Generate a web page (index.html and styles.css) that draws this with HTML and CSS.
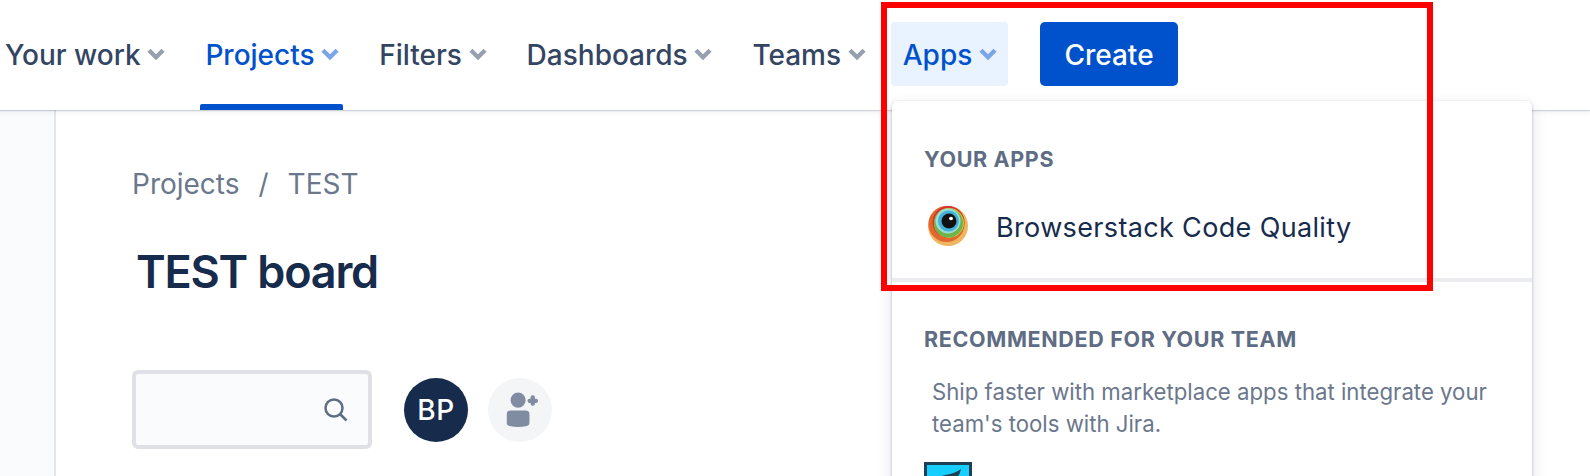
FILE: index.html
```html
<!DOCTYPE html>
<html lang="en">
<head>
<meta charset="utf-8">
<title>TEST board</title>
<link rel="stylesheet" href="styles.css">
</head>
<body>
<div class="page">
  <header class="topbar">
    <nav class="nav">
      <a class="nav-item">Your work<svg class="chev" viewBox="0 0 16 12"><path d="M1.500 2l6.500 6.500 6.500-6.500"/></svg></a>
      <a class="nav-item is-current">Projects<svg class="chev" viewBox="0 0 16 12"><path d="M1.500 2l6.500 6.500 6.500-6.500"/></svg><span class="underline"></span></a>
      <a class="nav-item">Filters<svg class="chev" viewBox="0 0 16 12"><path d="M1.500 2l6.500 6.500 6.500-6.500"/></svg></a>
      <a class="nav-item">Dashboards<svg class="chev" viewBox="0 0 16 12"><path d="M1.500 2l6.500 6.500 6.500-6.500"/></svg></a>
      <a class="nav-item">Teams<svg class="chev" viewBox="0 0 16 12"><path d="M1.500 2l6.500 6.500 6.500-6.500"/></svg></a>
      <a class="nav-item is-open">Apps<svg class="chev" viewBox="0 0 16 12"><path d="M1.500 2l6.500 6.500 6.500-6.500"/></svg></a>
    </nav>
    <button class="create">Create</button>
  </header>

  <div class="body">
    <aside class="rail"></aside>
    <main class="main">
      <div class="crumbs"><span>Projects</span><span class="slash">/</span><span>TEST</span></div>
      <h1 class="title">TEST board</h1>
      <div class="toolbar">
        <div class="search">
          <svg class="search-icon" viewBox="0 0 24 24"><circle cx="10" cy="10" r="8.500"/><path d="M16.500 16.500l6 6"/></svg>
        </div>
        <div class="avatar">BP</div>
        <div class="avatar-add">
          <svg viewBox="-2 0 36 38" class="add-icon">
            <circle cx="14" cy="8.500" r="8"/>
            <path d="M2 23.500a4 4 0 0 1 4-4h16a4 4 0 0 1 4 4v9c0 2-1 3-3 3.500-6 1.500-12 1.500-18 0-2-.5-3-1.500-3-3.500z"/>
            <rect x="24" y="7" width="11" height="4.500" rx="2"/>
            <rect x="27.250" y="3.500" width="4.500" height="11" rx="2"/>
          </svg>
        </div>
      </div>
    </main>
  </div>

  <section class="menu">
    <div class="menu-group menu-apps">
      <h2 class="menu-heading">YOUR APPS</h2>
      <div class="app-row">
        <svg class="app-logo" viewBox="0 0 40 40">
          <circle cx="20" cy="20" r="20" fill="#efb660"/>
          <circle cx="18.500" cy="18" r="18" fill="#e1672e"/>
          <circle cx="20.500" cy="16" r="16" fill="#d8352f"/>
          <circle cx="21" cy="17" r="15" fill="#c9cf3f"/>
          <circle cx="20.500" cy="17" r="14.500" fill="#6db54a"/>
          <circle cx="20" cy="15" r="12.500" fill="#9fdcd2"/>
          <circle cx="20.500" cy="15" r="10.500" fill="#3fb1dc"/>
          <circle cx="21" cy="15" r="7.500" fill="#111"/>
          <ellipse cx="23" cy="12.500" rx="2" ry="1.700" fill="#fff"/>
        </svg>
        <span class="app-name">Browserstack Code Quality</span>
      </div>
    </div>
    <div class="menu-group menu-rec">
      <h2 class="menu-heading">RECOMMENDED FOR YOUR TEAM</h2>
      <p class="menu-text">Ship faster with marketplace apps that integrate your team's tools with Jira.</p>
      <svg class="rec-logo" viewBox="0 0 48 48">
        <rect x="1.500" y="1.500" width="45" height="45" fill="#17cfff" stroke="#1d4057" stroke-width="3"/>
        <path d="M17 13c8 0 14-2 20-6-1 4-2 7-5 9-5-1-10-2-15-3z" fill="#1d4057"/>
      </svg>
    </div>
  </section>

  <div class="highlight"></div>
</div>
</body>
</html>
```

FILE: styles.css
```css
* { box-sizing: border-box; }
html, body { margin: 0; padding: 0; }
body { font-family: Inter, "Liberation Sans", sans-serif; background: #fff; color: #172b4d; }
.page { position: relative; width: 1590px; height: 476px; overflow: hidden; display: flex; flex-direction: column; }

.topbar { height: 110px; flex: none; display: flex; align-items: flex-start; padding: 22px 0 0; margin-left: -7px; background: #fff; box-shadow: 0 1px 1px rgba(9, 30, 66, .16), 0 2px 6px rgba(9, 30, 66, .07); position: relative; z-index: 1; width: 1597px; }
.nav { display: flex; gap: 16px; }
.nav-item { position: relative; height: 64px; padding: 1px 12px 0; display: flex; align-items: center; gap: 6.700px; font-size: 28px; font-weight: 500; color: #344563; border-radius: 4px; white-space: nowrap; }
.chev { width: 18px; height: 13px; flex: none; fill: none; stroke: #97a0af; stroke-width: 4; }
.is-current, .is-open { color: #0052cc; }
.is-current .chev, .is-open .chev { stroke: #7aa5e8; }
.is-open { background: #e9f2ff; margin-left: -3px; padding-left: 12px; padding-right: 11px; }
.underline { position: absolute; left: 7px; right: 8px; bottom: -24px; height: 6px; background: #0052cc; border-radius: 2px 2px 0 0; }
.create { margin-left: 32px; width: 138px; height: 64px; border: 0; border-radius: 5px; background: #0052cc; color: #fff; font: 500 28px Inter, "Liberation Sans", sans-serif; padding: 1px 0 0; }

.body { flex: 1; display: flex; min-height: 0; }
.rail { width: 56px; flex: none; background: #fafbfc; border-right: 2px solid #e4e6ea; }
.main { flex: 1; padding: 58px 0 0 76px; }
.crumbs { display: flex; align-items: center; gap: 19px; height: 32px; font-size: 28px; color: #6b778c; }
.title { margin: 44px 0 0 4px; font-size: 45px; line-height: 56px; font-weight: 600; letter-spacing: -1.200px; color: #172b4d; }
.toolbar { display: flex; align-items: center; margin-top: 70px; }
.search { width: 240px; height: 79px; padding-right: 20px; background: #fafbfc; border: 4px solid #dfe1e6; border-radius: 6px; display: flex; align-items: center; justify-content: flex-end; }
.search-icon { width: 24px; height: 24px; fill: none; stroke: #5e6c84; stroke-width: 2.500; }
.avatar { width: 64px; height: 64px; margin-left: 32px; border-radius: 50%; background: #172b4d; color: #fff; display: flex; align-items: center; justify-content: center; font-size: 28px; font-weight: 500; letter-spacing: .5px; }
.avatar-add { width: 64px; height: 64px; margin-left: 20px; border-radius: 50%; background: #f4f5f7; display: flex; align-items: center; justify-content: center; }
.add-icon { width: 34px; height: 36px; fill: #7f8ca1; overflow: visible; }

.menu { position: absolute; left: 892px; top: 101px; width: 640px; height: 420px; background: #fff; border-radius: 5px; box-shadow: 0 1px 3px rgba(9, 30, 66, .28), 0 6px 16px rgba(9, 30, 66, .12); z-index: 2; }
.menu-group { padding: 0 32px; }
.menu-apps { height: 181px; padding-top: 46px; border-bottom: 4px solid #ebecf0; }
.menu-heading { margin: 0; font-size: 21.500px; line-height: 24px; font-weight: 700; letter-spacing: .65px; color: #5e6c84; white-space: nowrap; }
.app-row { display: flex; align-items: center; gap: 28px; margin: 35px 0 0 4px; }
.app-logo { width: 40px; height: 40px; flex: none; }
.app-name { padding-top: 2px; font-size: 27px; letter-spacing: .35px; color: #172b4d; white-space: nowrap; }
.menu-rec { padding-top: 45px; }
.menu-text { margin: 25px 0 0 8px; font-size: 22.200px; line-height: 32px; color: #6b778c; width: 575px; }
.rec-logo { display: block; width: 48px; height: 48px; margin-top: 22px; }

.highlight { position: absolute; left: 881px; top: 2px; width: 552px; height: 289px; border: 6px solid #f00; z-index: 3; pointer-events: none; }
```
